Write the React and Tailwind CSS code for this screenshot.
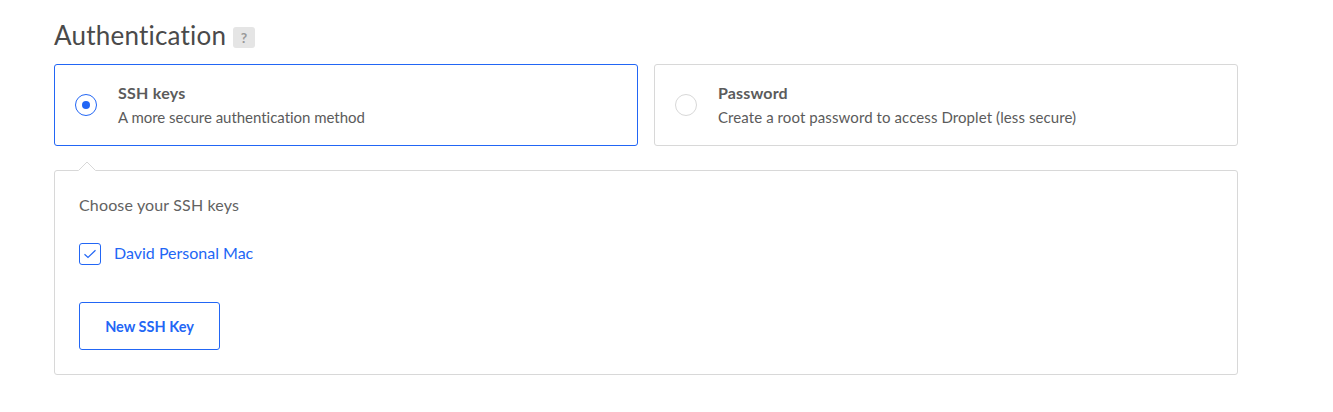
function Radio({ checked }) {
  return (
    <span
      className={`flex size-[22px] shrink-0 items-center justify-center rounded-full border ${
        checked ? "border-[#2266f5]" : "border-[#d8d8d8]"
      }`}
    >
      {checked && <span className="size-2 rounded-full bg-[#2266f5]" />}
    </span>
  );
}

function Option({ title, titleClass, text, textClass, checked }) {
  return (
    <div
      className={`flex h-[82px] flex-1 items-center gap-[21px] rounded-[3px] border pl-5 ${
        checked ? "border-[#2266f5]" : "border-[#d8d8d8]"
      }`}
    >
      <Radio checked={checked} />
      <div className="whitespace-nowrap text-[#5b5b5b]">
        <div className="flex h-6 items-center pb-0.5">
          <span className={`font-bold ${titleClass}`}>{title}</span>
        </div>
        <div className="flex h-[23px] items-center">
          <span className={textClass}>{text}</span>
        </div>
      </div>
    </div>
  );
}

export default function App() {
  return (
    <main className="h-[412px] w-[1333px] overflow-hidden bg-white pl-[54px] font-['Lato',sans-serif] text-[#626262]">
      <div className="w-[1184px]">
        <div className="flex h-16 items-start pt-5">
          <h2 className="-mt-px w-[179px] whitespace-nowrap text-[26px] leading-8 tracking-[0.22px] text-[#4a4a4a]">
            Authentication
          </h2>
          <span className="mt-[7px] flex h-[21px] w-[22px] items-center justify-center rounded-[3px] bg-[#e5e5e5] text-[14px] font-bold text-[#999999]">
            ?
          </span>
        </div>
        <div className="flex gap-4">
          <Option
            checked
            title="SSH keys"
            titleClass="text-base tracking-[0.25px]"
            text="A more secure authentication method"
            textClass="text-[15px] tracking-[-0.03px]"
          />
          <Option
            title="Password"
            titleClass="text-base tracking-[0.15px]"
            text="Create a root password to access Droplet (less secure)"
            textClass="text-[15px] tracking-[0.09px]"
          />
        </div>
        <section className="relative mt-6 flex h-[205px] flex-col items-start rounded-[3px] border border-[#d8d8d8] pl-6">
          <svg className="absolute -top-[10px] left-[23px]" width="18" height="11" viewBox="0 0 18 11">
            <path d="M0.5 9.5L9 1L17.5 9.5V11H0.5Z" fill="white" />
            <path d="M0.5 9.5L9 1L17.5 9.5" fill="none" stroke="#d8d8d8" />
          </svg>
          <p className="mt-[22px] whitespace-nowrap text-base leading-6">
            <span className="tracking-[0.15px]">Choose your SSH keys</span>
          </p>
          <label className="mt-[26px] flex h-[22px] items-center gap-[13px] whitespace-nowrap text-base text-[#2266f5]">
            <span className="flex size-[22px] items-center justify-center rounded-[3px] border border-[#2266f5]">
              <svg width="20" height="20" viewBox="0 0 20 20" fill="none" stroke="#2266f5" strokeWidth="1.2">
                <path d="M4.5 10.2L8 13.5L15.5 6.2" />
              </svg>
            </span>
            <span className="pb-0.5">David Personal Mac</span>
          </label>
          <button className="mt-[37px] flex h-12 w-[141px] items-center justify-center rounded-[3px] border border-[#2266f5] text-[14.5px] font-bold text-[#2266f5]">
            <span className="pt-0.5">New SSH Key</span>
          </button>
        </section>
      </div>
    </main>
  );
}
